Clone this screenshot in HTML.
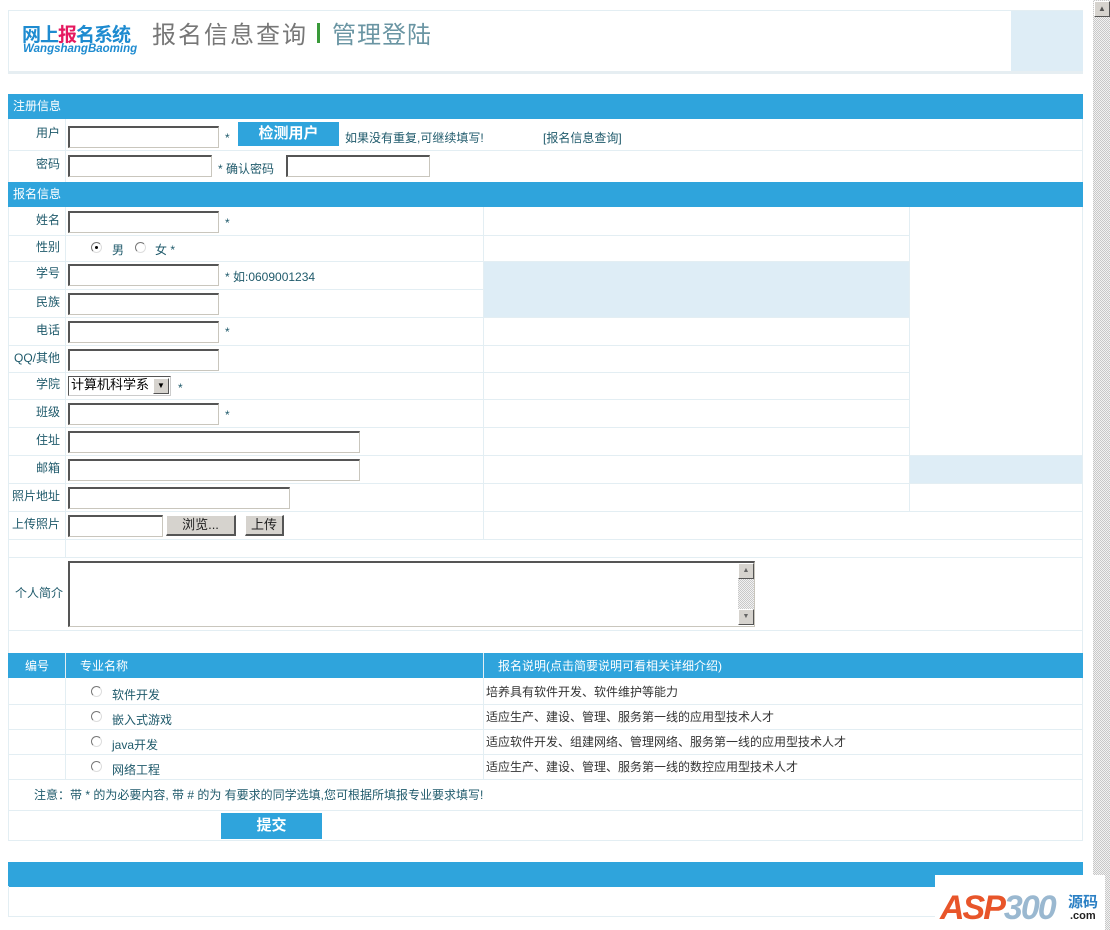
<!DOCTYPE html>
<html><head><meta charset="utf-8">
<style>
*{margin:0;padding:0;box-sizing:border-box}
body{width:1110px;height:930px;background:#fff;position:relative;overflow:hidden;font-family:"Liberation Sans","Noto Sans CJK SC","WenQuanYi Zen Hei",sans-serif;font-size:12px;color:#1f5a6b}
.a{position:absolute}
.bar{position:absolute;left:8px;width:1075px;background:#2fa4dc;color:#fff;font-size:12px;line-height:24px;padding-left:5px}
.hl{position:absolute;height:1px;background:#e3eef3}
.vl{position:absolute;width:1px;background:#e3eef3}
.lbl{position:absolute;width:55px;text-align:right;font-size:12px;white-space:nowrap;margin-top:-2px}
.in{position:absolute;height:22px;background:#fff;border:1px solid #c9c6bd;border-top:2px solid #555;border-left:2px solid #555}
.t{position:absolute;font-size:12px;white-space:nowrap;margin-top:-2px}
.btn{position:absolute;background:#d6d3ce;border:1px solid #fff;border-right:2px solid #555;border-bottom:2px solid #555;font-size:13px;text-align:center;line-height:18px;color:#222}
.rad{position:absolute;width:11px;height:11px;border-radius:50%;border:1px solid #777;border-right-color:#ddd;border-bottom-color:#ddd;background:#fff}
.lb{position:absolute;background:#deedf6}
</style></head><body>
<div class="a" style="left:1093px;top:0;width:17px;height:930px;background:repeating-conic-gradient(#c8c8c8 0 25%,#f2f2f2 0 50%) 0 0/2px 2px"></div>
<div class="a" style="left:1094px;top:1px;width:16px;height:16px;background:#d6d3ce;border:1px solid #fff;border-right-color:#555;border-bottom-color:#555;font-size:8px;text-align:center;line-height:14px;color:#555">▲</div>

<div class="a" style="left:8px;top:10px;width:1075px;height:63px;border:1px solid #e3eef3;background:#fff"></div>
<div class="lb" style="left:1011px;top:11px;width:72px;height:62px"></div>
<div class="a" style="left:8px;top:71px;width:1075px;height:3px;background:#e6eef2"></div>
<div class="t" style="left:22px;top:22px;font-size:19px;font-weight:bold;color:#1e8bd0;letter-spacing:-1px">网上<span style="color:#e5195f">报</span>名系统</div>
<div class="t" style="left:23px;top:45px;font-size:11.5px;font-weight:bold;font-style:italic;color:#1e8bd0">WangshangBaoming</div>
<div class="t" style="left:152px;top:17px;font-size:24px;color:#777;letter-spacing:2px">报名信息查询</div>
<div class="a" style="left:317px;top:23px;width:3px;height:20px;background:#3a9a3a"></div>
<div class="t" style="left:332px;top:17px;font-size:24px;color:#6a95a3;letter-spacing:1px">管理登陆</div>

<div class="bar" style="top:94px;height:25px">注册信息</div>
<div class="a" style="left:8px;top:119px;width:1075px;height:63px;border-left:1px solid #e3eef3;border-right:1px solid #e3eef3"></div>
<div class="hl" style="left:8px;top:150px;width:1075px"></div>
<div class="vl" style="left:65px;top:119px;height:63px"></div>
<div class="lbl" style="left:5px;top:126px">用户</div>
<div class="in" style="left:68px;top:126px;width:151px"></div>
<div class="t" style="left:225px;top:133px">*</div>
<div class="a" style="left:238px;top:122px;width:101px;height:24px;background:#2fa4dc;color:#fff;font-size:15px;font-weight:bold;text-align:center;line-height:24px">检测用户</div>
<div class="t" style="left:345px;top:131px">如果没有重复,可继续填写!</div>
<div class="t" style="left:543px;top:131px">[报名信息查询]</div>
<div class="lbl" style="left:5px;top:157px">密码</div>
<div class="in" style="left:68px;top:155px;width:144px"></div>
<div class="t" style="left:218px;top:162px">* 确认密码</div>
<div class="in" style="left:286px;top:155px;width:144px"></div>

<div class="bar" style="top:182px;height:25px">报名信息</div>
<div class="lb" style="left:484px;top:261px;width:425px;height:56px"></div>
<div class="lb" style="left:910px;top:455px;width:173px;height:28px"></div>
<div class="a" style="left:8px;top:207px;width:1075px;height:634px;border-left:1px solid #e3eef3;border-right:1px solid #e3eef3;border-bottom:1px solid #e3eef3"></div>
<div class="hl" style="left:8px;top:235px;width:902px"></div>
<div class="hl" style="left:8px;top:261px;width:902px"></div>
<div class="hl" style="left:8px;top:289px;width:476px"></div>
<div class="hl" style="left:8px;top:317px;width:902px"></div>
<div class="hl" style="left:8px;top:345px;width:902px"></div>
<div class="hl" style="left:8px;top:372px;width:902px"></div>
<div class="hl" style="left:8px;top:399px;width:902px"></div>
<div class="hl" style="left:8px;top:427px;width:902px"></div>
<div class="hl" style="left:8px;top:455px;width:1075px"></div>
<div class="hl" style="left:8px;top:483px;width:1075px"></div>
<div class="hl" style="left:8px;top:511px;width:1075px"></div>
<div class="hl" style="left:8px;top:539px;width:1075px"></div>
<div class="hl" style="left:8px;top:557px;width:1075px"></div>
<div class="hl" style="left:8px;top:630px;width:1075px"></div>
<div class="vl" style="left:65px;top:207px;height:350px"></div>
<div class="vl" style="left:483px;top:207px;height:332px"></div>
<div class="vl" style="left:909px;top:207px;height:304px"></div>

<div class="lbl" style="left:5px;top:213px">姓名</div><div class="in" style="left:68px;top:211px;width:151px"></div><div class="t" style="left:225px;top:218px">*</div>
<div class="lbl" style="left:5px;top:240px">性别</div>
<div class="rad" style="left:91px;top:242px"><div class="a" style="left:3px;top:3px;width:3px;height:3px;background:#000;border-radius:50%"></div></div>
<div class="t" style="left:112px;top:243px">男</div><div class="rad" style="left:135px;top:242px"></div><div class="t" style="left:155px;top:243px">女 *</div>
<div class="lbl" style="left:5px;top:266px">学号</div><div class="in" style="left:68px;top:264px;width:151px"></div><div class="t" style="left:225px;top:270px">* 如:0609001234</div>
<div class="lbl" style="left:5px;top:295px">民族</div><div class="in" style="left:68px;top:293px;width:151px"></div>
<div class="lbl" style="left:5px;top:323px">电话</div><div class="in" style="left:68px;top:321px;width:151px"></div><div class="t" style="left:225px;top:327px">*</div>
<div class="lbl" style="left:5px;top:351px">QQ/其他</div><div class="in" style="left:68px;top:349px;width:151px"></div>
<div class="lbl" style="left:5px;top:377px">学院</div>
<div class="a" style="left:68px;top:376px;width:103px;height:20px;border:1px solid #555;border-right-color:#ccc;border-bottom-color:#ccc;background:#fff;font-size:13px;line-height:15px;padding-left:2px;color:#000">计算机科学系</div>
<div class="a" style="left:153px;top:378px;width:16px;height:16px;background:#d6d3ce;border:1px solid #fff;border-right-color:#555;border-bottom-color:#555;font-size:8px;text-align:center;line-height:14px;color:#000">▼</div>
<div class="t" style="left:178px;top:383px">*</div>
<div class="lbl" style="left:5px;top:405px">班级</div><div class="in" style="left:68px;top:403px;width:151px"></div><div class="t" style="left:225px;top:410px">*</div>
<div class="lbl" style="left:5px;top:433px">住址</div><div class="in" style="left:68px;top:431px;width:292px"></div>
<div class="lbl" style="left:5px;top:461px">邮箱</div><div class="in" style="left:68px;top:459px;width:292px"></div>
<div class="lbl" style="left:5px;top:489px">照片地址</div><div class="in" style="left:68px;top:487px;width:222px"></div>
<div class="lbl" style="left:5px;top:517px">上传照片</div><div class="in" style="left:68px;top:515px;width:95px"></div>
<div class="btn" style="left:166px;top:515px;width:70px;height:21px">浏览...</div>
<div class="btn" style="left:245px;top:515px;width:39px;height:21px">上传</div>
<div class="lbl" style="left:5px;top:586px;width:58px">个人简介</div>
<div class="in" style="left:68px;top:561px;width:687px;height:66px"></div>
<div class="a" style="left:738px;top:563px;width:16px;height:62px;background:repeating-conic-gradient(#c8c8c8 0 25%,#f2f2f2 0 50%) 0 0/2px 2px"></div>
<div class="a" style="left:738px;top:563px;width:16px;height:16px;background:#d6d3ce;border:1px solid #fff;border-right-color:#555;border-bottom-color:#555;font-size:7px;text-align:center;line-height:14px;color:#666">▲</div>
<div class="a" style="left:738px;top:609px;width:16px;height:16px;background:#d6d3ce;border:1px solid #fff;border-right-color:#555;border-bottom-color:#555;font-size:7px;text-align:center;line-height:14px;color:#666">▼</div>

<div class="bar" style="top:653px;height:25px;padding:0"></div>
<div class="a" style="left:65px;top:653px;width:1px;height:25px;background:#e3eef3"></div>
<div class="a" style="left:483px;top:653px;width:1px;height:25px;background:#e3eef3"></div>
<div class="t" style="left:25px;top:659px;color:#fff">编号</div>
<div class="t" style="left:80px;top:659px;color:#fff">专业名称</div>
<div class="t" style="left:498px;top:659px;color:#fff">报名说明(点击简要说明可看相关详细介绍)</div>
<div class="vl" style="left:65px;top:678px;height:101px"></div>
<div class="vl" style="left:483px;top:678px;height:101px"></div>
<div class="hl" style="left:8px;top:704px;width:1075px"></div>
<div class="hl" style="left:8px;top:729px;width:1075px"></div>
<div class="hl" style="left:8px;top:754px;width:1075px"></div>
<div class="hl" style="left:8px;top:779px;width:1075px"></div>
<div class="hl" style="left:8px;top:810px;width:1075px"></div>
<div class="rad" style="left:91px;top:686px"></div><div class="t" style="left:112px;top:688px">软件开发</div>
<div class="rad" style="left:91px;top:711px"></div><div class="t" style="left:112px;top:713px">嵌入式游戏</div>
<div class="rad" style="left:91px;top:736px"></div><div class="t" style="left:112px;top:738px">java开发</div>
<div class="rad" style="left:91px;top:761px"></div><div class="t" style="left:112px;top:763px">网络工程</div>
<div class="t" style="left:486px;top:685px;color:#333">培养具有软件开发、软件维护等能力</div>
<div class="t" style="left:486px;top:710px;color:#333">适应生产、建设、管理、服务第一线的应用型技术人才</div>
<div class="t" style="left:486px;top:735px;color:#333">适应软件开发、组建网络、管理网络、服务第一线的应用型技术人才</div>
<div class="t" style="left:486px;top:760px;color:#333">适应生产、建设、管理、服务第一线的数控应用型技术人才</div>
<div class="t" style="left:34px;top:788px">注意：带 * 的为必要内容, 带 # 的为 有要求的同学选填,您可根据所填报专业要求填写!</div>
<div class="a" style="left:221px;top:813px;width:101px;height:26px;background:#2fa4dc;color:#fff;font-size:15px;font-weight:bold;text-align:center;line-height:26px">提交</div>

<div class="a" style="left:8px;top:862px;width:1075px;height:25px;background:#2fa4dc"></div>
<div class="a" style="left:8px;top:886px;width:1075px;height:31px;border:1px solid #e3eef3;border-top:none"></div>
<div class="a" style="left:935px;top:875px;width:170px;height:55px;background:#fff"></div>
<div class="t" style="left:940px;top:892px;font-size:34px;font-weight:bold;font-style:italic;color:#e8552a;letter-spacing:-2px;line-height:36px">ASP<span style="color:#9ab8d0">300</span></div>
<div class="t" style="left:1068px;top:893px;font-size:15px;font-weight:bold;color:#2a7fc4">源码</div>
<div class="t" style="left:1070px;top:912px;font-size:11px;font-weight:bold;color:#222">.com</div>
</body></html>
